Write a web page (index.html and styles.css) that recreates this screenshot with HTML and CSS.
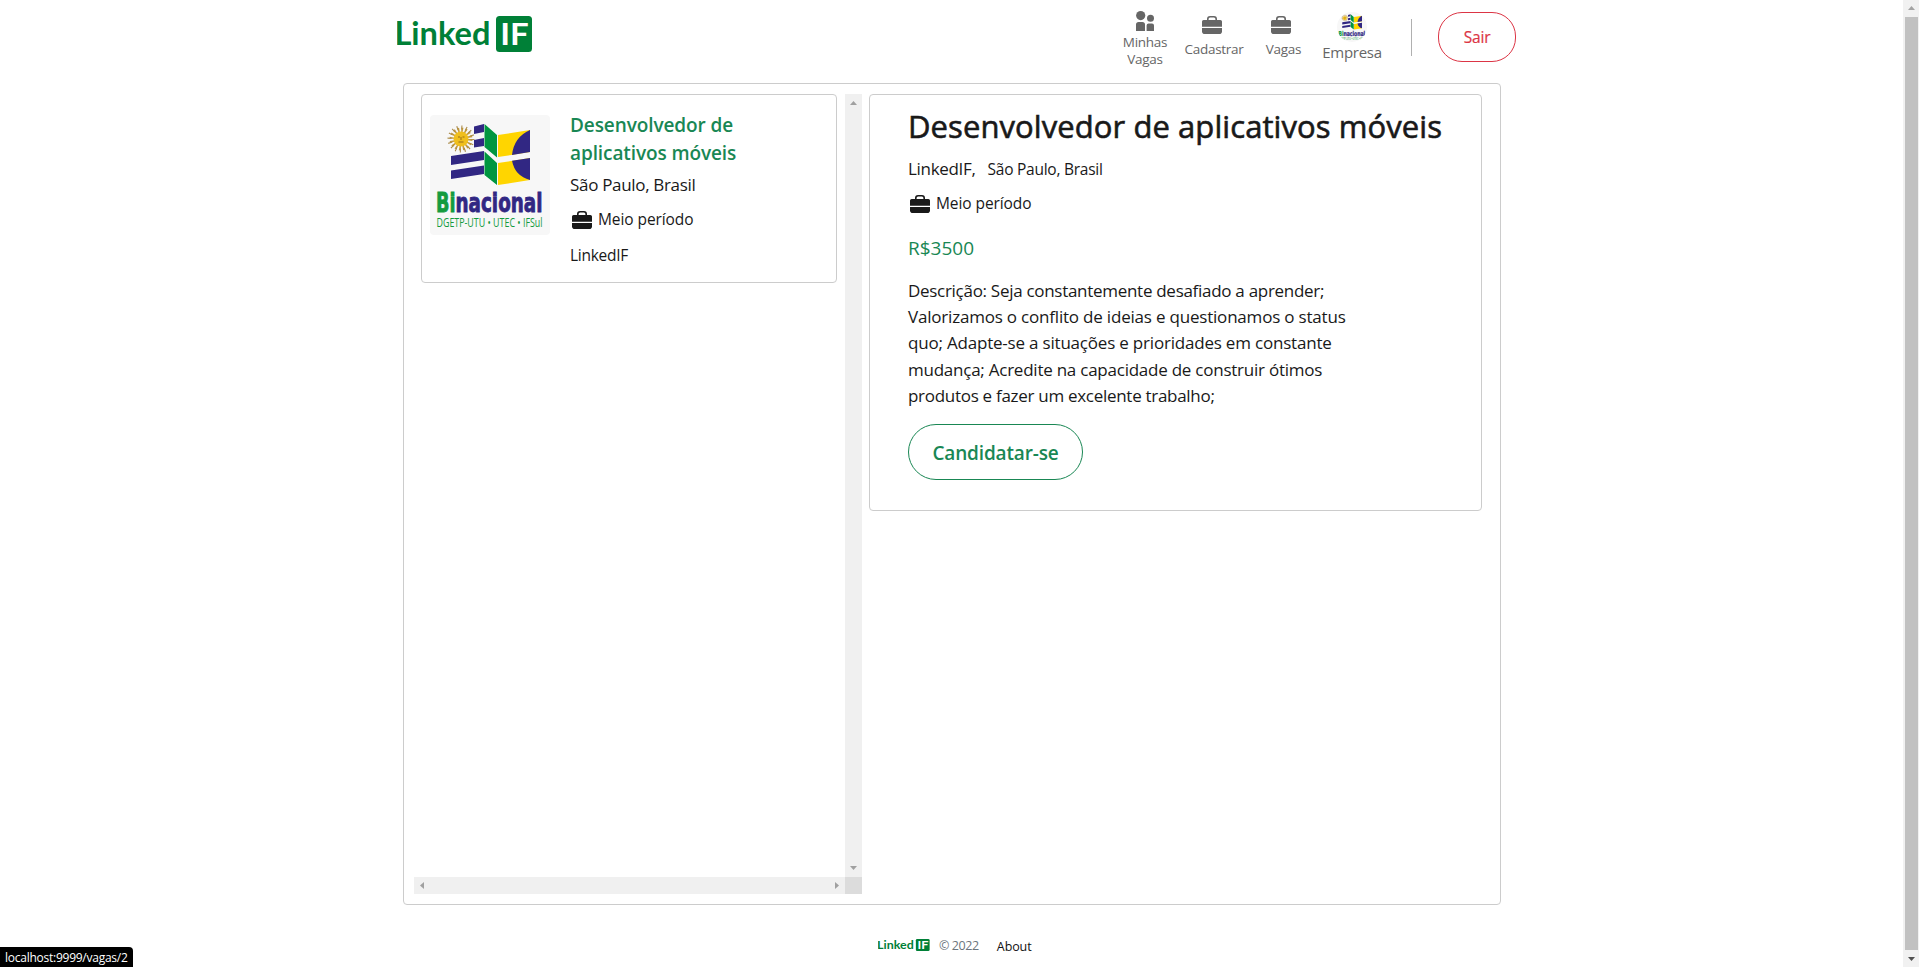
FILE: index.html
```html
<!DOCTYPE html>
<html lang="pt-BR">
<head>
<meta charset="utf-8">
<title>LinkedIF - Vagas</title>
<link rel="stylesheet" href="styles.css">
</head>
<body>
<svg class="defs" aria-hidden="true">
  <symbol id="logo" viewBox="0 0 136 36">
    <text class="logo-word" x="-2.6" y="29" textLength="96" lengthAdjust="spacingAndGlyphs">Linked</text>
    <rect x="99" y="0" width="36" height="36" rx="3.5" fill="#008037"/>
    <text class="logo-if" x="103.2" y="29" textLength="28.5" lengthAdjust="spacingAndGlyphs">IF</text>
  </symbol>
  <symbol id="briefcase" viewBox="0 0 20 18">
    <path d="M0 10.7V5.6Q0 4 1.6 4H5V3Q5 0 8 0h4q3 0 3 3v1h3.400q1.600 0 1.600 1.600v5.100zM6.600 4h6.800V3q0-1.500-1.500-1.500H8.100Q6.600 1.500 6.600 3z" fill-rule="evenodd"/>
    <path d="M0 11.900h20v3.300q0 2.800-2.800 2.800H2.800Q0 18 0 15.200z"/>
  </symbol>
  <symbol id="people" viewBox="0 0 18 20">
    <circle cx="4.700" cy="4.600" r="4.600"/>
    <circle cx="14.500" cy="7.200" r="3.500"/>
    <path d="M0 20v-6.400Q0 11 2.600 11h3.800Q9 11 9 13.600V20zM10.600 20v-5.500q0-2 2-2h3.400q2 0 2 2V20z"/>
  </symbol>
  <symbol id="binacional" viewBox="0 0 120 120">
    <rect width="120" height="120" fill="#f7f7f7"/>
    <circle cx="31" cy="24" r="9" fill="none" stroke="#c39a3a" stroke-width="5" stroke-dasharray="1.700 1.835"/>
    <circle cx="31" cy="24" r="11.500" fill="none" stroke="#a98a4a" stroke-width="4" stroke-dasharray="1 3.516"/>
    <circle cx="31" cy="24" r="7.500" fill="#f0bf1c"/>
    <path d="M28 22h2m2.500 0h2M31 22v3m-2.500 2h5" stroke="#8a681e" stroke-width=".9" fill="none"/>
    <path fill="#312783" d="M44 11.500l10-2.500v8l-10 2zM44 25l10-2v8l-10 1.500zM21 41l33-5v9l-33 5zM21 55.500l33-5v8.500l-33 5z"/>
    <path fill="#009640" d="M54.500 9l12.500 11v22.500L54.500 32zM54.500 36.500L67 48v22L54.500 60z"/>
    <path fill="#ffd500" d="M68 20l32-5v22l-32 5zM68 48l32-5v22l-32 5z"/>
    <path fill="#312783" d="M100 15v22l-18 3q2-18 18-25zM100 43v22q-15-4-18-19.300z"/>
    <text class="bi-green" x="6" y="96.500" textLength="19.500" lengthAdjust="spacingAndGlyphs">Bi</text>
    <text class="bi-blue" x="25.500" y="96.500" textLength="87" lengthAdjust="spacingAndGlyphs">nacional</text>
    <text class="bi-sub" x="6.500" y="112" textLength="106" lengthAdjust="spacingAndGlyphs">DGETP-UTU • UTEC • IFSul</text>
  </symbol>
</svg>

<div class="page">
  <header class="header">
    <svg class="logo" role="img" aria-label="LinkedIF"><use href="#logo"/></svg>
    <nav class="nav">
      <a class="nav-item nav-mine"><svg class="ico-people"><use href="#people"/></svg><span>Minhas<br>Vagas</span></a>
      <a class="nav-item nav-register"><svg class="ico-brief"><use href="#briefcase"/></svg><span>Cadastrar</span></a>
      <a class="nav-item nav-jobs"><svg class="ico-brief"><use href="#briefcase"/></svg><span>Vagas</span></a>
      <a class="nav-item nav-company"><svg class="avatar"><use href="#binacional"/></svg><span>Empresa</span></a>
      <span class="divider"></span>
      <button class="btn-exit">Sair</button>
    </nav>
  </header>

  <main class="board">
    <section class="list">
      <div class="list-view">
        <article class="job">
          <svg class="job-logo"><use href="#binacional"/></svg>
          <div class="job-info">
            <h2>Desenvolvedor de<br>aplicativos móveis</h2>
            <p class="job-place">São Paulo, Brasil</p>
            <p class="job-time"><svg class="ico-brief"><use href="#briefcase"/></svg>Meio período</p>
            <p class="job-company">LinkedIF</p>
          </div>
        </article>
      </div>
      <div class="bar-v"><svg width="7" height="4"><path d="M3.500 0L7 4H0z"/></svg><svg width="7" height="4"><path d="M0 0h7L3.500 4z"/></svg></div>
      <div class="bar-h"><svg width="4" height="7"><path d="M4 0v7L0 3.500z"/></svg><svg width="4" height="7"><path d="M0 0v7l4-3.500z"/></svg></div>
      <div class="bar-corner"></div>
    </section>

    <article class="detail">
      <h1>Desenvolvedor de aplicativos móveis</h1>
      <p class="detail-place"><span>LinkedIF,</span><small>São Paulo, Brasil</small></p>
      <p class="detail-time"><svg class="ico-brief"><use href="#briefcase"/></svg>Meio período</p>
      <p class="salary">R$3500</p>
      <p class="description">Descrição: Seja constantemente desafiado a aprender;<br><span class="looser">Valorizamos o conflito de ideias e questionamos o status<br>quo; Adapte-se a situações e prioridades em constante<br></span><span class="loose">mudança; Acredite na capacidade de construir ótimos</span><br>produtos e fazer um excelente trabalho;</p>
      <button class="btn-apply">Candidatar-se</button>
    </article>
  </main>

  <footer class="footer">
    <svg class="logo-small" role="img" aria-label="LinkedIF" preserveAspectRatio="none" viewBox="0 0 136 36"><use href="#logo" width="136" height="36"/></svg>
    <span class="copy">© 2022</span>
    <a class="about">About</a>
  </footer>
</div>

<div class="page-scroll">
  <svg width="7" height="4" fill="#a3a3a3"><path d="M3.500 0L7 4H0z"/></svg>
  <div class="thumb"></div>
  <svg width="7" height="4" fill="#505050"><path d="M0 0h7L3.500 4z"/></svg>
</div>
<div class="status">localhost:9999/vagas/2</div>
</body>
</html>
```
FILE: styles.css
```css
* { box-sizing: border-box; }

body {
  margin: 0;
  display: flex;
  height: 967px;
  overflow: hidden;
  background: #fff;
  color: #191919;
  font-family: "Open Sans", "Noto Sans", sans-serif;
}

h1, h2, p { margin: 0; }
svg { display: block; flex: none; }
button { font-family: inherit; background: #fff; padding: 0; }

.defs { display: none; }
.logo-word { font: 700 33px Lato, sans-serif; fill: #008037; }
.logo-if { font: 700 31px Lato, sans-serif; fill: #fff; }
.bi-green, .bi-blue { font: 700 27px "DejaVu Sans", sans-serif; fill: #149b3e; stroke: #149b3e; stroke-width: .9; }
.bi-blue { fill: #312783; stroke: #312783; }
.bi-sub { font: 400 12px "Open Sans", sans-serif; fill: #149b3e; }

.page { width: 1903px; display: flex; flex-direction: column; }

/* Header */
.header {
  height: 83px;
  padding: 0 387px 0 397px;
  display: flex;
  justify-content: space-between;
  align-items: flex-start;
}
.logo { width: 136px; height: 36px; margin-top: 16px; }
.nav { display: flex; align-items: flex-start; }
.nav-item {
  display: flex;
  flex-direction: column;
  align-items: center;
  text-align: center;
  color: #666;
  fill: #666;
  font-size: 13.500px;
  line-height: 17px;
  letter-spacing: -.28px;
}
.ico-brief { width: 20px; height: 18px; }
.ico-people { width: 18px; height: 20px; margin-bottom: 3px; }
.nav-mine { width: 52px; padding-top: 11px; margin-right: 9px; }
.nav-register { width: 68px; padding-top: 16px; margin-right: 14px; }
.nav-jobs { width: 43px; padding-top: 16px; margin-right: 15px; }
.nav-register svg, .nav-jobs svg { margin: 0 4px 7px 0; }
.nav-jobs svg { margin-right: 5px; }
.nav-company { width: 64px; padding-top: 12px; margin-right: 27px; font-size: 15px; line-height: 20px; }
.avatar { width: 30px; height: 30px; border-radius: 50%; }
.divider { width: 1px; height: 37px; margin: 19px 26px 0 0; background: #b0b0b0; }
.btn-exit {
  width: 78px;
  height: 50px;
  margin-top: 12px;
  border: 1px solid #dc3545;
  border-radius: 24px;
  color: #dc3545;
  font-size: 15.500px;
  font-weight: 500;
  letter-spacing: -.2px;
  -webkit-text-stroke: .2px #dc3545;
}

/* Board */
.board {
  width: 1098px;
  height: 822px;
  margin-left: 403px;
  padding: 10px;
  border: 1px solid #ccc;
  border-radius: 4px;
  display: flex;
  align-items: flex-start;
}
.list {
  display: grid;
  grid-template: 783px 17px / 431px 17px;
  margin-right: 7px;
}
.list-view { padding: 0 8px 0 7px; }
.bar-v, .bar-h {
  display: flex;
  justify-content: space-between;
  align-items: center;
  background: #f0f0f0;
  fill: #a0a0a0;
}
.bar-v { flex-direction: column; padding: 7px 0; }
.bar-h { padding: 0 6px; }
.bar-corner { background: #dcdcdc; }

.job {
  height: 189px;
  padding-left: 8px;
  display: flex;
  border: 1px solid #ccc;
  border-radius: 4px;
}
.job-logo { width: 120px; height: 120px; margin: 20px 20px 0 0; border-radius: 4px; }
.job-info { padding-top: 16px; }
.job-info h2 { font-size: 19px; font-weight: 600; line-height: 28px; letter-spacing: -.1px; color: #198754; }
.job-place { margin-top: 5px; font-size: 17px; line-height: 26px; letter-spacing: -.32px; }
.job-time, .detail-time { display: flex; align-items: center; font-size: 15.500px; line-height: 24px; letter-spacing: -.08px; fill: #191919; }
.job-time { margin-top: 9px; }
.job-time svg { margin: 1px 6px 0 2px; }
.job-company { margin-top: 12px; font-size: 15.500px; line-height: 24px; letter-spacing: -.27px; }

/* Detail */
.detail {
  width: 613px;
  height: 417px;
  padding: 12px 0 0 38px;
  border: 1px solid #ccc;
  border-radius: 4px;
}
.detail h1 {
  font-size: 31px;
  font-weight: 500;
  line-height: 38px;
  letter-spacing: .08px;
  white-space: nowrap;
  -webkit-text-stroke: .6px #191919;
}
.detail-place { display: flex; align-items: baseline; margin-top: 11px; font-size: 17px; line-height: 26px; letter-spacing: -.32px; }
.detail-place small { margin-left: 12px; font-size: 15.500px; letter-spacing: -.25px; }
.detail-time { margin-top: 9px; }
.detail-time svg { margin: 1px 6px 0 2px; }
.salary { margin-top: 18px; font-size: 19px; line-height: 30px; color: #198754; }
.description { margin-top: 15px; font-size: 17px; line-height: 26.200px; letter-spacing: -.29px; white-space: nowrap; }
.looser { letter-spacing: -.2px; }
.loose { letter-spacing: -.24px; }
.btn-apply {
  display: block;
  width: 175px;
  height: 56px;
  margin-top: 15px;
  padding-top: 1px;
  border: 1px solid #198754;
  border-radius: 28px;
  color: #198754;
  font-size: 19px;
  font-weight: 600;
  letter-spacing: -.15px;
}

/* Footer */
.footer { display: flex; align-items: center; padding-left: 878px; margin-top: 30px; height: 20px; font-size: 12.500px; }
.logo-small { width: 52px; height: 12px; }
.copy { margin-left: 9px; color: #6c757d; letter-spacing: -.4px; }
.about { margin: 2px 0 0 18px; color: #111; letter-spacing: -.1px; }

/* Window scrollbar */
.page-scroll {
  width: 16px;
  height: 967px;
  padding: 6px 0;
  display: flex;
  flex-direction: column;
  align-items: center;
  justify-content: space-between;
  background: #f1f1f1;
}
.thumb { width: 13px; height: 933px; background: #c1c1c1; }

/* Link preview over the page corner */
.status {
  position: fixed;
  left: 0;
  bottom: 0;
  width: 133px;
  height: 20px;
  padding: 1px 0 0 5px;
  background: #000;
  color: #fff;
  border-top-right-radius: 4px;
  font-size: 12px;
  line-height: 20px;
  letter-spacing: -.25px;
}
```
